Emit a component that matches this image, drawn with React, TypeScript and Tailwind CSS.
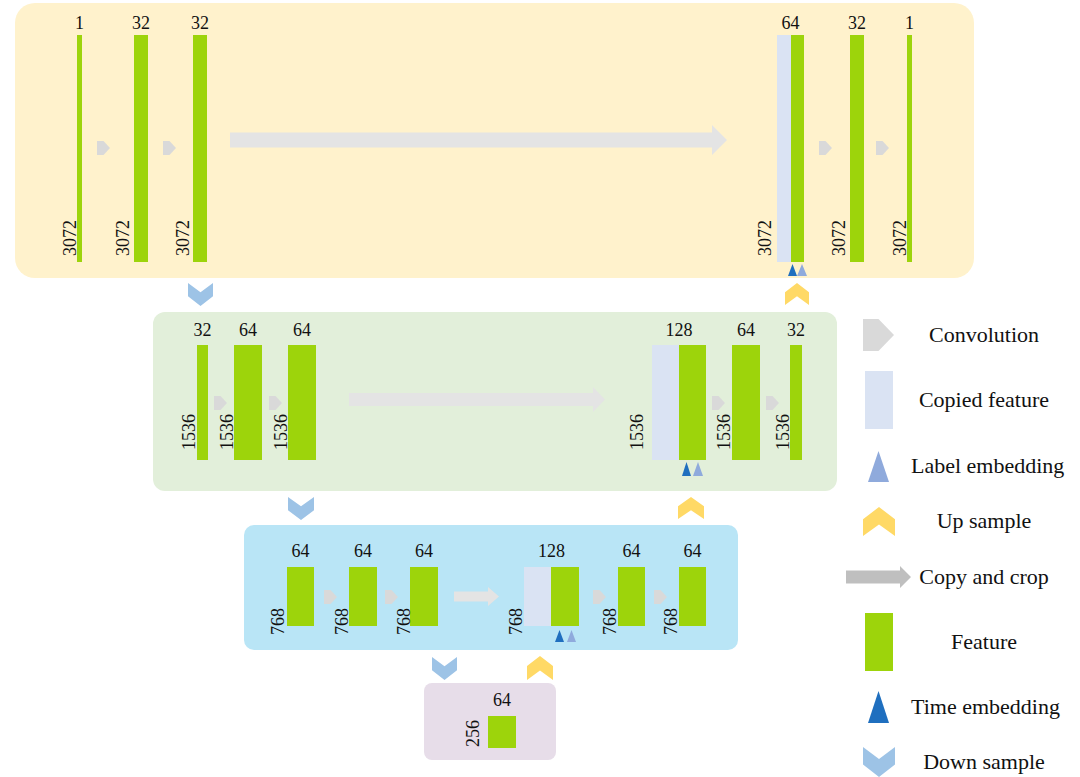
import React from "react";

const DARKT = "#1f6fbf";
const LIGHTT = "#8faadc";

function Conv({ className = "", w = 13, h = 14 }: { className?: string; w?: number; h?: number }) {
  return (
    <svg className={`block shrink-0 ${className}`} width={w} height={h} viewBox={`0 0 ${w} ${h}`}>
      <polygon points={`0,0 ${w * 0.5},0 ${w},${h / 2} ${w * 0.5},${h} 0,${h}`} fill="#d9d9d9" />
    </svg>
  );
}

function Arrow({
  w,
  head,
  sh,
  hh,
  color = "#e4e4e4",
  className = "",
}: {
  w: number;
  head: number;
  sh: number;
  hh: number;
  color?: string;
  className?: string;
}) {
  const hs = w - head;
  const top = (hh - sh) / 2;
  return (
    <svg className={`block shrink-0 ${className}`} width={w} height={hh} viewBox={`0 0 ${w} ${hh}`}>
      <polygon
        points={`0,${top} ${hs},${top} ${hs},0 ${w},${hh / 2} ${hs},${hh} ${hs},${top + sh} 0,${top + sh}`}
        fill={color}
      />
    </svg>
  );
}

function Chevron({ w, h, dir, className = "" }: { w: number; h: number; dir: "up" | "down"; className?: string }) {
  const pts =
    dir === "down"
      ? `0,0 ${w / 2},${h * 0.4} ${w},0 ${w},${h * 0.58} ${w / 2},${h} 0,${h * 0.58}`
      : `0,${h} ${w / 2},${h * 0.6} ${w},${h} ${w},${h * 0.42} ${w / 2},0 0,${h * 0.42}`;
  return (
    <svg className={`block shrink-0 ${className}`} width={w} height={h} viewBox={`0 0 ${w} ${h}`}>
      <polygon points={pts} fill={dir === "down" ? "#9dc3e6" : "#ffd966"} />
    </svg>
  );
}

function Tri({ w, h, color }: { w: number; h: number; color: string }) {
  return (
    <svg className="block shrink-0" width={w} height={h} viewBox={`0 0 ${w} ${h}`}>
      <polygon points={`${w / 2},0 ${w},${h} 0,${h}`} fill={color} />
    </svg>
  );
}

function Block({
  label,
  vtext,
  barCls,
  copiedCls,
  lblCls,
  vCls,
  tri,
  className = "",
}: {
  label: string;
  vtext: string;
  barCls: string;
  copiedCls?: string;
  lblCls: string;
  vCls: string;
  tri?: React.ReactNode;
  className?: string;
}) {
  return (
    <div className={`relative flex shrink-0 ${className}`}>
      {copiedCls ? <div className={`bg-[#dae3f3] ${copiedCls}`} /> : null}
      <div className={`bg-[#9dd40b] ${barCls}`} />
      <div
        className={`absolute bottom-full left-1/2 -translate-x-1/2 whitespace-nowrap text-[18px] leading-none ${lblCls}`}
      >
        {label}
      </div>
      <div className={`absolute origin-bottom-left -rotate-90 whitespace-nowrap text-[18px] leading-none ${vCls}`}>
        {vtext}
      </div>
      {tri}
    </div>
  );
}

const legend: { cls: string; icon: React.ReactNode; text: string }[] = [
  { cls: "h-[64px]", icon: <Conv w={31} h={32} />, text: "Convolution" },
  { cls: "h-[66px]", icon: <div className="h-[58px] w-[28px] bg-[#dae3f3]" />, text: "Copied feature" },
  { cls: "h-[66px]", icon: <Tri w={21} h={31} color={LIGHTT} />, text: "Label embedding" },
  { cls: "h-[44px]", icon: <Chevron w={32} h={29} dir="up" />, text: "Up sample" },
  { cls: "h-[68px]", icon: <Arrow w={65} head={11} sh={13} hh={22} color="#bfbfbf" />, text: "Copy and crop" },
  { cls: "h-[62px]", icon: <div className="h-[58px] w-[28px] bg-[#9dd40b]" />, text: "Feature" },
  { cls: "h-[68px]", icon: <Tri w={21} h={32} color={DARKT} />, text: "Time embedding" },
  { cls: "h-[42px]", icon: <Chevron w={32} h={30} dir="down" />, text: "Down sample" },
];

export default function App() {
  const l1 = { vtext: "3072", barCls: "h-[227px]", lblCls: "mb-[3px]" };
  const l2 = { vtext: "1536", barCls: "h-[115px]", lblCls: "mb-[6px]" };
  const l3 = { vtext: "768", barCls: "h-[59px]", lblCls: "mb-[7px]" };

  return (
    <div className="flex h-[777px] w-[1080px] flex-col overflow-hidden bg-white pt-[3px] font-[Liberation_Serif] text-[#111]">
      {/* Level 1 */}
      <div className="ml-[15px] flex h-[275px] w-[959px] shrink-0 items-center rounded-[20px] bg-[#fff2cc] pb-[15px] pl-[62px] pt-[30px]">
        <Block {...l1} label="1" barCls="h-[227px] w-[5px]" vCls="bottom-[6px] left-[2px]" />
        <Conv className="ml-[15px]" />
        <Block {...l1} label="32" barCls="h-[227px] w-[14px]" vCls="bottom-[6px] left-[-2px]" className="ml-[24px]" />
        <Conv className="ml-[15px]" />
        <Block {...l1} label="32" barCls="h-[227px] w-[14px]" vCls="bottom-[6px] left-[-1px]" className="ml-[17px]" />
        <Arrow w={497} head={15} sh={15} hh={30} className="mb-[16px] ml-[23px]" />
        <Block
          {...l1}
          label="64"
          copiedCls="h-[227px] w-[14px]"
          barCls="h-[227px] w-[13px]"
          vCls="bottom-[6px] left-[-3px]"
          className="ml-[50px]"
          tri={
            <div className="absolute left-[11px] top-full mt-[2px] flex">
              <Tri w={9} h={12} color={DARKT} />
              <Tri w={10} h={12} color={LIGHTT} />
            </div>
          }
        />
        <Conv className="ml-[15px]" />
        <Block {...l1} label="32" barCls="h-[227px] w-[14px]" vCls="bottom-[6px] left-[-2px]" className="ml-[18px]" />
        <Conv className="ml-[12px]" />
        <Block {...l1} label="1" barCls="h-[227px] w-[5px]" vCls="bottom-[6px] left-[2px]" className="ml-[18px]" />
      </div>

      <div className="flex">
        {/* Lower levels */}
        <div className="flex w-[846px] shrink-0 flex-col">
          <div className="mt-[5px] flex h-[23px] items-start">
            <Chevron w={25} h={23} dir="down" className="ml-[188px]" />
            <Chevron w={24} h={22} dir="up" className="ml-[572px]" />
          </div>

          {/* Level 2 */}
          <div className="ml-[153px] mt-[6px] flex h-[179px] w-[684px] items-center rounded-[12px] bg-[#e2efda] pb-[31px] pl-[44px] pt-[33px]">
            <Block {...l2} label="32" barCls="h-[115px] w-[11px]" vCls="bottom-[10px] left-[1px]" />
            <Conv className="ml-[6px]" />
            <Block {...l2} label="64" barCls="h-[115px] w-[28px]" vCls="bottom-[10px] left-[2px]" className="ml-[7px]" />
            <Conv className="ml-[7px]" />
            <Block {...l2} label="64" barCls="h-[115px] w-[28px]" vCls="bottom-[10px] left-[2px]" className="ml-[6px]" />
            <Arrow w={256} head={12} sh={13} hh={25} className="mb-[6px] ml-[33px]" />
            <Block
              {...l2}
              label="128"
              copiedCls="h-[115px] w-[27px]"
              barCls="h-[115px] w-[27px]"
              vCls="bottom-[10px] left-[-6px]"
              className="ml-[47px]"
              tri={
                <div className="absolute left-[30px] top-full mt-[2px] flex gap-[2px]">
                  <Tri w={9} h={14} color={DARKT} />
                  <Tri w={10} h={14} color={LIGHTT} />
                </div>
              }
            />
            <Conv className="ml-[6px]" />
            <Block {...l2} label="64" barCls="h-[115px] w-[28px]" vCls="bottom-[10px] left-[1px]" className="ml-[7px]" />
            <Conv className="ml-[6px]" />
            <Block {...l2} label="32" barCls="h-[115px] w-[12px]" vCls="bottom-[10px] left-[2px]" className="ml-[11px]" />
          </div>

          <div className="mt-[6px] flex h-[23px] items-start">
            <Chevron w={26} h={23} dir="down" className="ml-[288px]" />
            <Chevron w={26} h={22} dir="up" className="ml-[364px]" />
          </div>

          {/* Level 3 */}
          <div className="ml-[244px] mt-[5px] flex h-[125px] w-[494px] items-center rounded-[10px] bg-[#b9e5f6] pb-[24px] pl-[43px] pt-[42px]">
            <Block {...l3} label="64" barCls="h-[59px] w-[27px]" vCls="bottom-[-9px] left-[0px]" />
            <Conv className="ml-[10px]" />
            <Block {...l3} label="64" barCls="h-[59px] w-[28px]" vCls="bottom-[-9px] left-[2px]" className="ml-[12px]" />
            <Conv className="ml-[8px]" />
            <Block {...l3} label="64" barCls="h-[59px] w-[28px]" vCls="bottom-[-9px] left-[3px]" className="ml-[12px]" />
            <Arrow w={45} head={11} sh={10} hh={19} className="ml-[16px]" />
            <Block
              {...l3}
              label="128"
              copiedCls="h-[59px] w-[27px]"
              barCls="h-[59px] w-[28px]"
              vCls="bottom-[-9px] left-[1px]"
              className="ml-[25px]"
              tri={
                <div className="absolute left-[31px] top-full mt-[4px] flex gap-[3px]">
                  <Tri w={9} h={12} color={DARKT} />
                  <Tri w={9} h={12} color={LIGHTT} />
                </div>
              }
            />
            <Conv className="ml-[14px]" />
            <Block {...l3} label="64" barCls="h-[59px] w-[27px]" vCls="bottom-[-9px] left-[1px]" className="ml-[12px]" />
            <Conv className="ml-[9px]" />
            <Block {...l3} label="64" barCls="h-[59px] w-[27px]" vCls="bottom-[-9px] left-[1px]" className="ml-[12px]" />
          </div>

          <div className="mt-[6px] flex h-[24px] items-end">
            <Chevron w={25} h={23} dir="down" className="ml-[432px]" />
            <Chevron w={26} h={24} dir="up" className="ml-[70px]" />
          </div>

          {/* Level 4 */}
          <div className="ml-[424px] mt-[3px] flex h-[77px] w-[132px] items-start rounded-[8px] bg-[#e7dde9] pl-[64px] pt-[33px]">
            <Block
              label="64"
              vtext="256"
              barCls="h-[32px] w-[28px]"
              lblCls="mb-[7px]"
              vCls="bottom-[1px] left-[-6px]"
            />
          </div>
        </div>

        {/* Legend */}
        <div className="flex w-[222px] shrink-0 flex-col pt-[25px]">
          {legend.map((l, i) => (
            <div key={i} className={`flex items-center ${l.cls}`}>
              <div className="flex w-[65px] justify-center">{l.icon}</div>
              <div className="w-[146px] whitespace-nowrap text-center text-[22px] leading-none">{l.text}</div>
            </div>
          ))}
        </div>
      </div>
    </div>
  );
}
